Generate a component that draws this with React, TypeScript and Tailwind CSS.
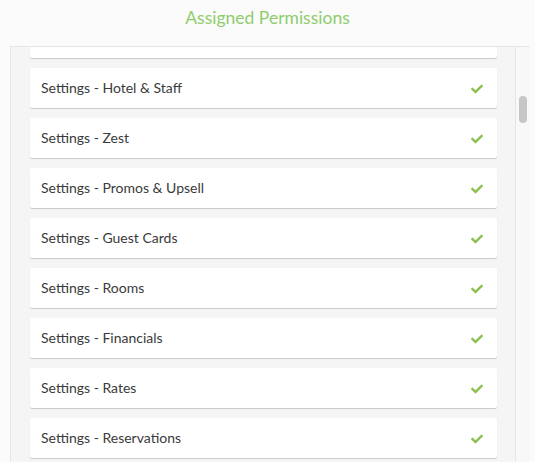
import React from "react";
import { FaCheck } from "react-icons/fa";

const items = [
  "",
  "Settings - Hotel & Staff",
  "Settings - Zest",
  "Settings - Promos & Upsell",
  "Settings - Guest Cards",
  "Settings - Rooms",
  "Settings - Financials",
  "Settings - Rates",
  "Settings - Reservations",
];

export default function App() {
  return (
    <div
      className="w-[535px] h-[462px] overflow-hidden bg-[#fbfbfb] text-[#3a3a3a]"
      style={{ fontFamily: "Lato, 'Open Sans', sans-serif" }}
    >
      <div className="h-[46px] pt-[6px] text-center text-[17.5px] leading-[24px] text-[#8fcd6b]">
        Assigned Permissions
      </div>
      <div className="flex h-[416px]">
        <div className="ml-[10px] w-[505px] h-full overflow-hidden border-l border-t border-[#e6e6e6] bg-[#f5f5f5]">
          <div className="flex flex-col gap-[10px] pl-[19px] pr-[18px] mt-[-29px]">
            {items.map((t, i) => (
              <div
                key={i}
                className="flex h-[40px] shrink-0 items-center justify-between rounded-[2px] bg-white pl-[11px] pr-[14px] pb-[2px] text-[14px] shadow-[0_1px_1px_rgba(0,0,0,0.18)]"
              >
                <span>{t}</span>
                {t && <FaCheck className="text-[#8cc152] w-[12px] h-[12px] translate-y-[2px]" />}
              </div>
            ))}
          </div>
        </div>
        <div className="w-[15px] h-full border-l border-t border-[#e6e6e6] bg-[#f8f8f8] pt-[49px] pl-[3px]">
          <div className="w-[8px] h-[27px] rounded-full bg-[#c6c6c6]" />
        </div>
      </div>
    </div>
  );
}
